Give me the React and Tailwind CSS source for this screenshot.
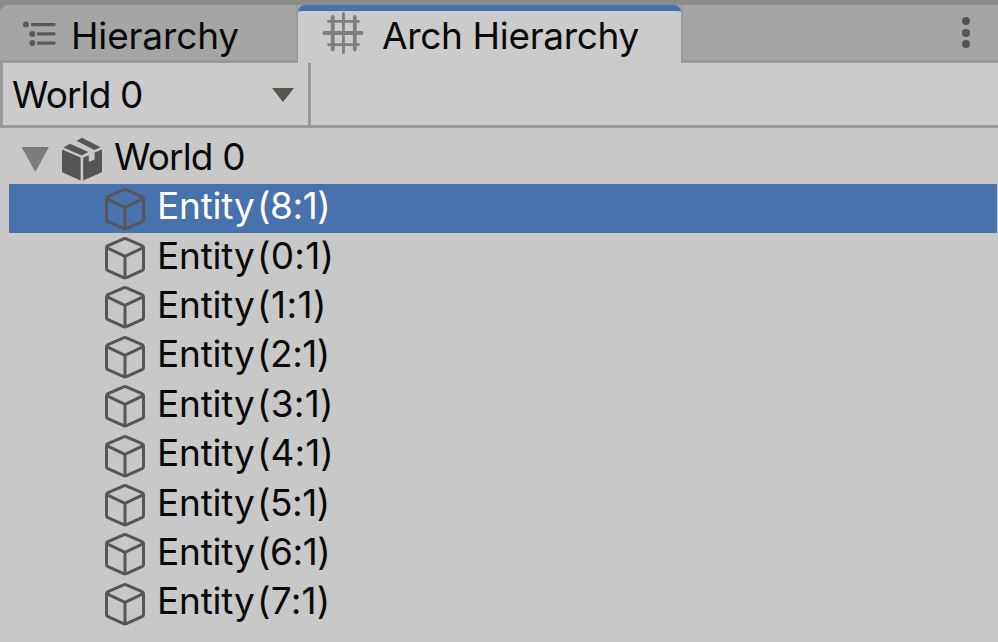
const entities = [
  { id: '(8:1)', spacing: 'tracking-[-0.5px]' },
  { id: '(0:1)', spacing: 'tracking-[0.2px]' },
  { id: '(1:1)', spacing: 'tracking-[0.4px]' },
  { id: '(2:1)', spacing: 'tracking-[-0.5px]' },
  { id: '(3:1)', spacing: 'tracking-[0.2px]' },
  { id: '(4:1)', spacing: 'tracking-[0px]' },
  { id: '(5:1)', spacing: 'tracking-[-0.5px]' },
  { id: '(6:1)', spacing: 'tracking-[-0.5px]' },
  { id: '(7:1)', spacing: 'tracking-[0.2px]' },
];

function ListIcon() {
  return (
    <svg className="ml-[22px] h-[28px] w-[34px] shrink-0" viewBox="0 0 34 28" fill="#595959">
      <circle cx="4" cy="4.6" r="3" />
      <circle cx="10.3" cy="14" r="3" />
      <circle cx="10.3" cy="23" r="3" />
      <rect x="9" y="3" width="24.5" height="3.2" rx="1" />
      <rect x="15" y="12.3" width="18.5" height="3.2" rx="1" />
      <rect x="15" y="21.5" width="18.5" height="3.2" rx="1" />
    </svg>
  );
}

function GridIcon() {
  return (
    <svg className="mt-px ml-[24px] h-[42px] w-[42px] shrink-0" viewBox="0 0 42 42" fill="none" stroke="#7f7f7f" strokeLinecap="round">
      <path d="M10.7 5V37.5M32.8 5V37.5" strokeWidth="3.8" />
      <path d="M6.5 9.4H36.5M6.5 32.6H36.5" strokeWidth="2.8" />
      <path d="M21.4 1.5V40.5" strokeWidth="2.8" />
      <path d="M2.3 21H39.7" strokeWidth="3.8" />
    </svg>
  );
}

function PackageIcon() {
  return (
    <svg className="ml-[12px] h-[44px] w-[42px] shrink-0" viewBox="0 0 42 44" fill="#555555">
      <path d="M1 12.4L19.6 20.6V43.6L2.2 35.8Q1 35.2 1 34Z" />
      <path d="M22.2 20.6L27.8 18.2V25L33.6 22.4V15.6L41 12.4V34Q41 35.2 39.8 35.8L22.2 43.6Z" />
      <path d="M2.4 10.6L9 6.8L27.4 15L20.8 18.4Z" />
      <path d="M15.6 3.8L21 0.8L39.6 10.2L33.4 13Z" />
    </svg>
  );
}

function CubeIcon() {
  return (
    <svg className="ml-[95px] h-[44px] w-[42px] shrink-0" viewBox="0 0 42 44" fill="none" stroke="#565656" strokeWidth="3" strokeLinejoin="round" strokeLinecap="round">
      <path d="M19.6 2.8Q21 2.2 22.4 2.8L38 9.6Q39.5 10.4 39.5 12V32.5Q39.5 34 38 34.7L22.4 41.6Q21 42.2 19.6 41.6L4 34.7Q2.5 34 2.5 32.5V12Q2.5 10.4 4 9.6Z" />
      <path d="M3.2 11.8L21 20.4L38.8 11.8M21 20.4V41.5" />
    </svg>
  );
}

export default function App() {
  return (
    <div className="flex h-[642px] w-[998px] flex-col overflow-hidden bg-[#c8c8c8] font-['Inter',sans-serif] text-[37px] leading-[46px] whitespace-nowrap text-[#090909] [font-feature-settings:'calt'_0]">
      <header className="flex h-[63px] shrink-0 bg-[#8a8a8a] pt-[5px]">
        <div className="flex h-[58px] w-[298px] shrink-0 items-start rounded-tl-[8px] border-r-2 border-b-3 border-[#999999] bg-[#a5a5a5] pt-[8px]">
          <div className="flex items-center">
            <div className="pb-[5px]"><ListIcon /></div>
            <span className="ml-[15px] tracking-[-0.15px]">Hierarchy</span>
          </div>
        </div>
        <div className="bg-[#a5a5a5]">
          <div className="flex h-[58px] w-[383px] shrink-0 items-start overflow-hidden rounded-t-[7px] border-t-6 border-[#4772b0] bg-[#cbcbcb]">
            <GridIcon />
            <span className="mt-[2px] ml-[18px] tracking-[-0.33px]">Arch Hierarchy</span>
          </div>
        </div>
        <div className="flex h-[58px] flex-1 justify-end border-b-3 border-l-2 border-[#999999] bg-[#a5a5a5] pt-[12px] pr-[28px]">
          <div className="flex flex-col gap-[3.5px]">
            <i className="size-[8px] rounded-full bg-[#555555]" />
            <i className="size-[8px] rounded-full bg-[#555555]" />
            <i className="size-[8px] rounded-full bg-[#555555]" />
          </div>
        </div>
      </header>
      <div className="flex h-[65px] shrink-0 border-b-3 border-l-3 border-[#999999] bg-[#cbcbcb]">
        <div className="flex w-[308px] items-center justify-between border-r-3 border-[#999999] pr-[14px] pl-[9px]">
          <span className="pt-[2px] tracking-[-0.9px]">World 0</span>
          <svg className="mt-px h-[14px] w-[22px]" viewBox="0 0 22 14" fill="#56564f">
            <path d="M0 0H22L11 14Z" />
          </svg>
        </div>
      </div>
      <main className="pt-[6px]">
        <div className="flex h-[50px] items-center">
          <svg className="mt-px ml-[21px] h-[25px] w-[28px]" viewBox="0 0 28 25" fill="#7c7c7c">
            <path d="M0.5 0H28L14.3 25Z" />
          </svg>
          <PackageIcon />
          <span className="ml-[11px] pb-[4px] tracking-[-0.85px]">World 0</span>
        </div>
        {entities.map(({ id, spacing }, i) => (
          <div
            key={id}
            className={`ml-[9px] mr-[1px] flex h-[49.4px] items-center ${i === 0 ? 'bg-[#4772ad] text-white' : ''}`}
          >
            <CubeIcon />
            <span className="ml-[11px] pb-[5px] tracking-[-0.2px]">
              Entity<span className={`ml-[2.5px] ${spacing}`}>{id}</span>
            </span>
          </div>
        ))}
      </main>
    </div>
  );
}
